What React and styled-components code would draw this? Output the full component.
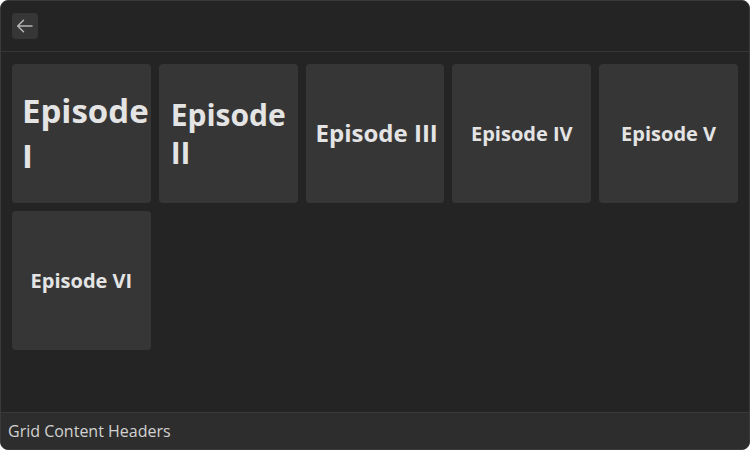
import styled, { createGlobalStyle } from "styled-components";

const GlobalStyle = createGlobalStyle`
  html, body {
    margin: 0;
    padding: 0;
    background: #ffffff;
  }
  * {
    box-sizing: border-box;
  }
`;

const Window = styled.div`
  width: 750px;
  height: 450px;
  display: flex;
  flex-direction: column;
  background: #242424;
  border: 1px solid #3a3a3a;
  border-radius: 8px;
  overflow: hidden;
  font-family: "Open Sans", "Noto Sans", sans-serif;
`;

const Header = styled.div`
  height: 51px;
  flex-shrink: 0;
  display: flex;
  align-items: center;
  padding: 0 11px;
  border-bottom: 1px solid #363636;
`;

const BackButton = styled.button`
  width: 26px;
  height: 26px;
  display: flex;
  align-items: center;
  justify-content: center;
  padding: 0;
  border: none;
  border-radius: 4px;
  background: #363636;
  color: #b4b4b4;
  cursor: pointer;
`;

const Content = styled.div`
  flex: 1;
  padding: 12px 11px;
`;

const Grid = styled.div`
  display: grid;
  grid-template-columns: repeat(5, minmax(0, 1fr));
  grid-auto-rows: 139px;
  gap: 8px;
`;

const Tile = styled.div`
  display: flex;
  align-items: center;
  justify-content: safe center;
  padding: 10px;
  min-width: 0;
  background: #363636;
  border-radius: 4px;
  color: #e4e4e4;
  font-weight: 700;
  font-size: ${(p) => p.$size}px;
  line-height: ${(p) => p.$lh};
`;

const Label = styled.span`
  text-align: left;
  flex-shrink: 0;
  ${(p) => (p.$stacked ? "width: min-content;" : "white-space: nowrap;")}
`;

const Footer = styled.div`
  height: 37px;
  flex-shrink: 0;
  display: flex;
  align-items: center;
  padding: 0 7px;
  background: #2d2d2d;
  border-top: 1px solid #3a3a3a;
  color: #d2d2d2;
  font-size: 16px;
`;

const episodes = [
  { title: "Episode I", size: 33, lh: 1.34, stacked: true },
  { title: "Episode II", size: 30, lh: 1.26, stacked: true },
  { title: "Episode III", size: 24, lh: 1.36 },
  { title: "Episode IV", size: 20, lh: 1.36 },
  { title: "Episode V", size: 20, lh: 1.36 },
  { title: "Episode VI", size: 20, lh: 1.36 },
];

function BackArrow() {
  return (
    <svg width="26" height="26" viewBox="0 0 26 26" fill="none">
      <path
        d="M20 13H5.8M11.5 7.2L5.7 13L11.5 18.8"
        stroke="currentColor"
        strokeWidth="1.5"
        strokeLinecap="round"
        strokeLinejoin="round"
      />
    </svg>
  );
}

export default function App() {
  return (
    <>
      <GlobalStyle />
      <Window>
        <Header>
          <BackButton aria-label="Back">
            <BackArrow />
          </BackButton>
        </Header>
        <Content>
          <Grid>
            {episodes.map((ep) => (
              <Tile key={ep.title} $size={ep.size} $lh={ep.lh}>
                <Label $stacked={ep.stacked}>{ep.title}</Label>
              </Tile>
            ))}
          </Grid>
        </Content>
        <Footer>Grid Content Headers</Footer>
      </Window>
    </>
  );
}
